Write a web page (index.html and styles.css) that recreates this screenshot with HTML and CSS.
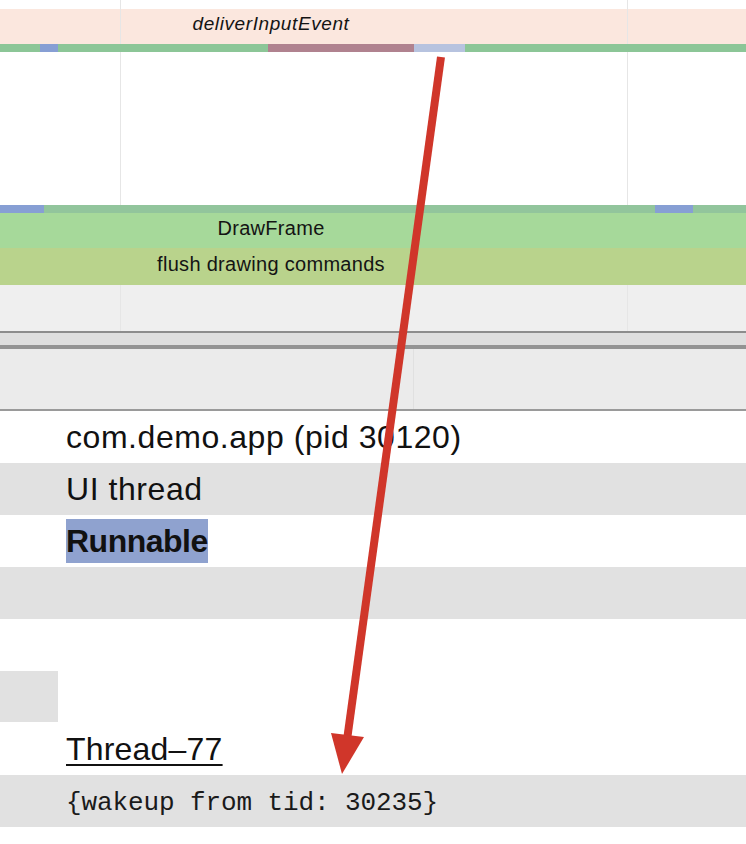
FILE: index.html
```html
<!DOCTYPE html>
<html>
<head>
<meta charset="utf-8">
<link rel="stylesheet" href="styles.css">
</head>
<body>
<div class="page">
  <div class="timeline">
    <div class="gap-top grid"></div>
    <div class="slice slice-input grid"><span class="label italic">deliverInputEvent</span></div>
    <div class="bar">
      <span class="seg green" style="width:40px"></span>
      <span class="seg blue" style="width:18px"></span>
      <span class="seg green" style="width:210px"></span>
      <span class="seg mauve" style="width:146px"></span>
      <span class="seg lblue" style="width:51px"></span>
      <span class="seg green flex"></span>
    </div>
    <div class="gap-mid grid"></div>
    <div class="bar bar2">
      <span class="seg blue" style="width:44px"></span>
      <span class="seg green2" style="width:611px"></span>
      <span class="seg blue" style="width:38px"></span>
      <span class="seg green2 flex"></span>
    </div>
    <div class="slice slice-draw"><span class="label">DrawFrame</span></div>
    <div class="slice slice-flush"><span class="label">flush drawing commands</span></div>
    <div class="gap-gray grid"></div>
  </div>
  <div class="divider">
    <div class="line-a"></div>
    <div class="band-a"></div>
    <div class="line-b"></div>
    <div class="band-b"></div>
    <div class="line-c"></div>
  </div>
  <div class="rows">
    <div class="row"><span class="txt">com.demo.app (pid 30120)</span></div>
    <div class="row alt"><span class="txt">UI thread</span></div>
    <div class="row"><span class="txt sel">Runnable</span></div>
    <div class="row alt"></div>
    <div class="row"></div>
    <div class="row"><span class="stub"></span></div>
    <div class="row"><span class="txt link">Thread–77</span></div>
    <div class="row alt"><span class="txt mono">{wakeup from tid: 30235}</span></div>
  </div>
  <svg class="arrow" width="746" height="844" viewBox="0 0 746 844">
    <line x1="441" y1="57" x2="347" y2="740" stroke="#d0362a" stroke-width="8"/>
    <polygon points="331,733 364,737 342,774" fill="#d0362a"/>
  </svg>
</div>
</body>
</html>
```

FILE: styles.css
```css
html, body {
  margin: 0;
  padding: 0;
  background: #ffffff;
}
.page {
  position: relative;
  width: 746px;
  height: 844px;
  overflow: hidden;
  font-family: "Liberation Sans", Arial, sans-serif;
  color: #111;
}
.grid {
  background-image:
    linear-gradient(#e6e6e6, #e6e6e6),
    linear-gradient(#e6e6e6, #e6e6e6);
  background-size: 1px 100%, 1px 100%;
  background-position: 120px 0, 627px 0;
  background-repeat: no-repeat;
}
.gap-top { height: 9px; }
.slice {
  display: flex;
  align-items: center;
}
.label {
  display: block;
  width: 542px;
  text-align: center;
  font-size: 20px;
  letter-spacing: 0.3px;
  color: #141414;
  margin-top: -4px;
}
.italic {
  font-style: italic;
  font-size: 19px;
  letter-spacing: 0.6px;
  margin-top: -6px;
}
.slice-input {
  height: 35px;
  background-color: #fbe7de;
}
.bar {
  display: flex;
  height: 8px;
}
.seg { display: block; height: 100%; }
.flex { flex: 1; }
.green { background: #8cc697; }
.green2 { background: #92c59c; }
.blue { background: #879fd4; }
.mauve { background: #b0828f; }
.lblue { background: #b7c3df; }
.gap-mid { height: 153px; }
.slice-draw {
  height: 35px;
  background: #a6d99a;
}
.slice-flush {
  height: 37px;
  background: #b9d38c;
}
.gap-gray {
  height: 46px;
  background-color: #efefef;
}
.divider .line-a { height: 2px; background: #8c8c8c; }
.divider .band-a { height: 12px; background: #dedede; }
.divider .line-b { height: 4px; background: #939393; }
.divider .band-b {
  height: 60px;
  background-color: #ebebeb;
  background-image: linear-gradient(#e0e0e0, #e0e0e0);
  background-size: 1px 100%;
  background-position: 413px 0;
  background-repeat: no-repeat;
}
.divider .line-c { height: 2px; background: #9a9a9a; }
.row {
  height: 52px;
  display: flex;
  align-items: center;
  padding-left: 66px;
  background: #ffffff;
  position: relative;
}
.row.alt { background: #e1e1e1; }
.txt {
  font-size: 32px;
  line-height: 44px;
  letter-spacing: 0.55px;
}
.sel {
  font-weight: bold;
  background: #8fa2cf;
  letter-spacing: -0.5px;
}
.link { text-decoration: underline; text-underline-offset: 4px; text-decoration-thickness: 2px; letter-spacing: 0.2px; }
.mono {
  font-family: "Liberation Mono", "Courier New", monospace;
  font-size: 26px;
  letter-spacing: -0.1px;
  margin-top: 4px;
  color: #1a1a1a;
}
.stub {
  position: absolute;
  left: 0;
  top: 0;
  width: 58px;
  height: 51px;
  background: #e1e1e1;
}
.arrow {
  position: absolute;
  left: 0;
  top: 0;
}
```
